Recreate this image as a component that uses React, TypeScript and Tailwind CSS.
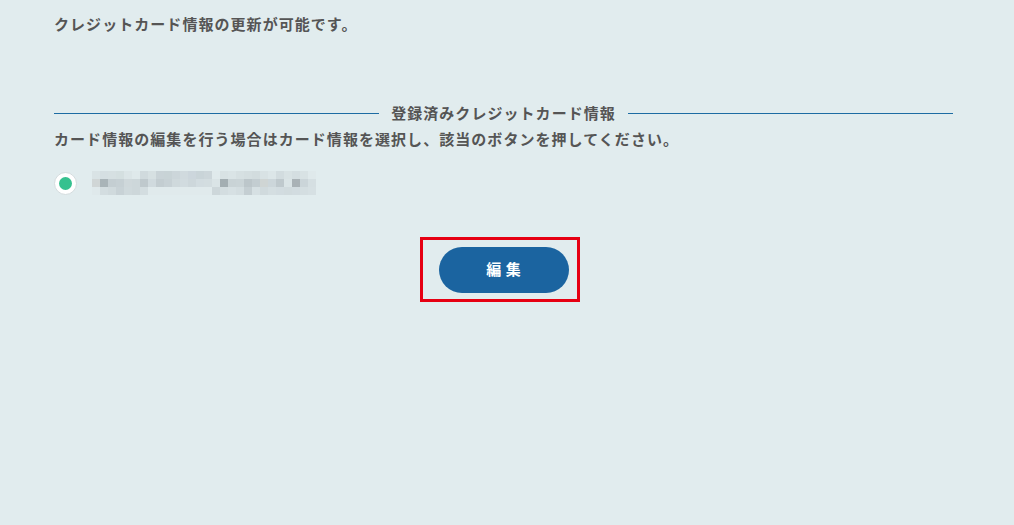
const font = { fontFamily: '"Noto Sans CJK JP", "Noto Sans", sans-serif' };

// pixelated (masked) card number
const mosaic: string[][] = [
  ["#d9e3e5", "#d5dfe2", "#d6e0e2", "#d4dfe0", "#dbe5e7", "#dfe9eb", "#d0dadd", "#d6e0e2", "#c9d3d7", "#c8d3d6", "#ccd6da", "#d0dade", "#ccd6dc", "#c9d4d8", "#ccd6da", "#e0eaec", "#d8e2e4", "#dae4e6", "#d6e0e2", "#d4dee0", "#d2dcde", "#d8e2e4", "#dce6e8", "#d2dcdf", "#d8e2e4", "#d4dee1", "#d8e2e4", "#dfe9eb"],
  ["#d0d6d6", "#a9b4b8", "#c4ced2", "#c6d0d4", "#cfd8db", "#cdd7da", "#bfc9cd", "#d0dade", "#c3cdd1", "#c7d1d5", "#cfd9dc", "#d1dbdf", "#cdd7db", "#d2dce0", "#d3dde0", "#dae4e6", "#a3aeb2", "#c9d3d6", "#cad4d7", "#bcc6ca", "#c3cdd1", "#cfd5d4", "#ccd6da", "#bfc9cd", "#dae4e6", "#a9b2b6", "#cbd5d9", "#d5dfe2"],
  ["#dfe9eb", "#d3dde0", "#d0dadd", "#c8d2d6", "#cfd9dc", "#cdd7da", "#d3dde0", "#e0eaec", "#e0eaec", "#e0eaec", "#e0eaec", "#e0eaec", "#e0eaec", "#e0eaec", "#e0eaec", "#cdd7da", "#d3dde0", "#d6e0e3", "#d3dde0", "#c4ced2", "#d6e0e3", "#d0dadd", "#d4dee1", "#d2dce0", "#d1dbde", "#d2dce0", "#d4dee1", "#d6e0e3"],
];

function Mosaic() {
  return (
    <div className="flex flex-col">
      {mosaic.map((row, i) => (
        <div key={i} className="flex">
          {row.map((c, j) => (
            <div key={j} className="w-[8px] h-[8px]" style={{ backgroundColor: c }} />
          ))}
        </div>
      ))}
    </div>
  );
}

export default function App() {
  return (
    <div className="w-[1014px] h-[525px] bg-[#e1ecee] overflow-hidden" style={font}>
      <div className="ml-[54px] w-[899px] pt-[13px]">
        <p className="text-[15px] leading-[22px] font-bold tracking-[0.07em] text-[#555]">
          クレジットカード情報の更新が可能です。
        </p>

        <div className="mt-[67px] flex items-center">
          <div className="flex-1 h-px bg-[#1d6ca3]" />
          <span className="px-[12px] text-[15px] leading-[22px] font-bold tracking-[0.07em] text-[#555]">
            登録済みクレジットカード情報
          </span>
          <div className="flex-1 h-px bg-[#1d6ca3]" />
        </div>

        <p className="mt-[4px] text-[15px] leading-[22px] font-bold tracking-[0.07em] text-[#555]">
          カード情報の編集を行う場合はカード情報を選択し、該当のボタンを押してください。
        </p>

        <div className="mt-[21px] flex items-center gap-[15px]">
          <div className="w-[23px] h-[23px] rounded-full bg-white border border-[#d4dcde] flex items-center justify-center">
            <div className="w-[13px] h-[13px] rounded-full bg-[#35c18f]" />
          </div>
          <Mosaic />
        </div>

        <div className="mt-[42px] flex justify-center">
          <div className="mr-[8px] w-[160px] h-[65px] border-[3px] border-[#e60012] flex items-center pl-[16px]">
            <div className="w-[130px] h-[46px] rounded-full bg-[#1b64a0] flex items-center justify-center text-white text-[15px] font-bold">
              <span className="tracking-[0.3em] pl-[0.3em]">編集</span>
            </div>
          </div>
        </div>
      </div>
    </div>
  );
}
